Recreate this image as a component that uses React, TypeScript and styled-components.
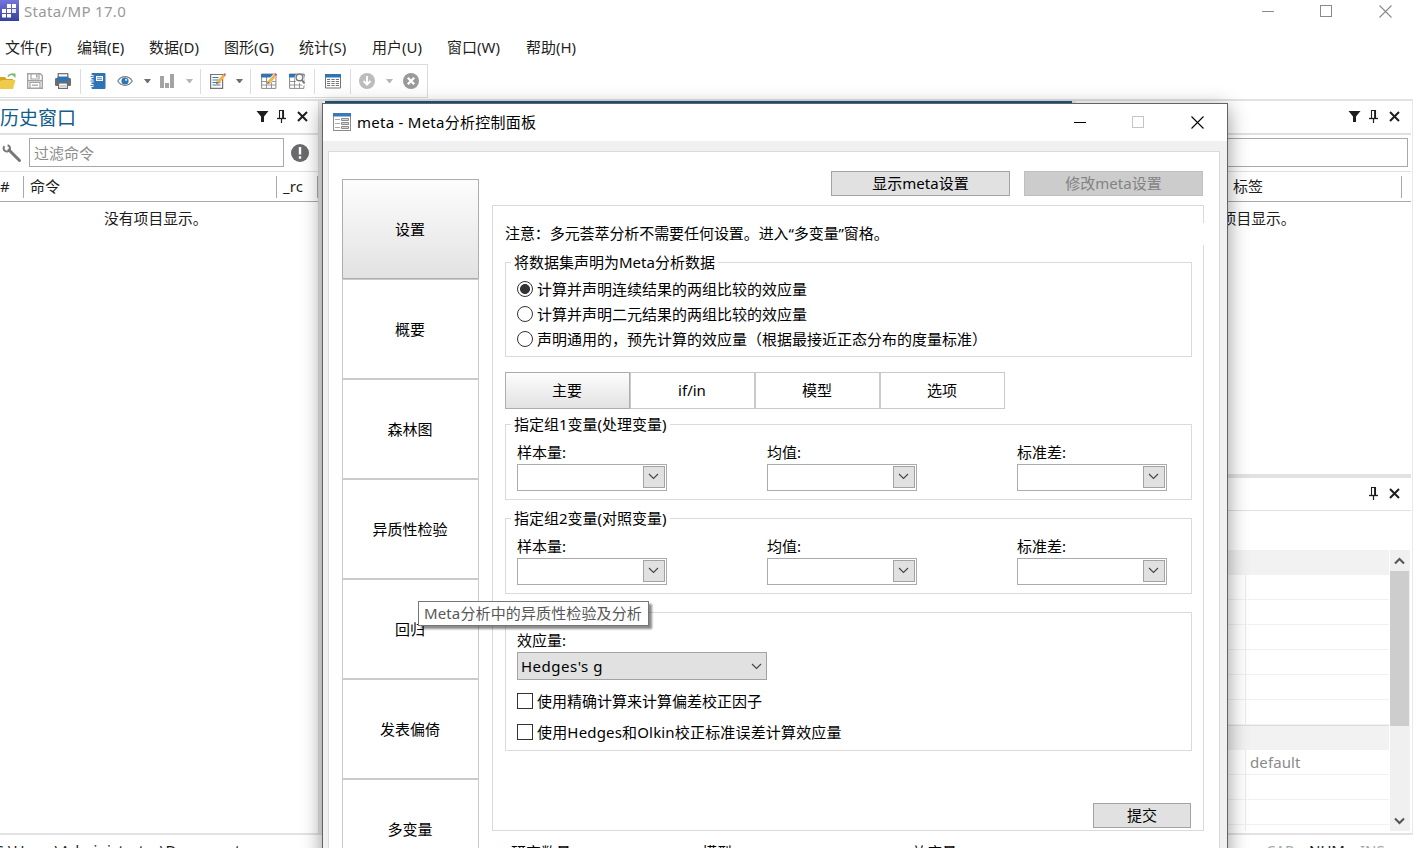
import React from 'react';
import styled, { createGlobalStyle } from 'styled-components';

const Global = createGlobalStyle`
  * { box-sizing: border-box; }
  html, body { margin: 0; padding: 0; background: #fff; overflow: hidden; }
  body { font-family: "Noto Sans", "Noto Sans CJK SC", sans-serif; font-size: 15px; line-height: 22px; color: #000; }
  svg { display: block; flex: none; }
`;

const Screen = styled.div`
  position: relative;
  width: 1413px;
  height: 848px;
  overflow: hidden;
  display: flex;
  flex-direction: column;
  background: #fff;
  white-space: nowrap;
`;

/* ---------- application chrome ---------- */

const TitleBar = styled.header`
  height: 31px;
  display: flex;
  align-items: flex-start;
  flex: none;
`;
const AppName = styled.span`
  margin-left: 5px;
  flex: 1;
  color: #999;
  font-size: 15px;
  letter-spacing: 0.33px;
  line-height: 23px;
`;
const WindowControls = styled.div`
  display: flex;
  gap: 46px;
  padding: 5px 21px 0 0;
`;

const MenuBar = styled.nav`
  height: 33px;
  flex: none;
  display: flex;
  align-items: center;
  color: #1f1f1f;
  padding: 0 0 2px 5px;
`;
const MenuItem = styled.span<{ $w: number }>`
  width: ${p => p.$w}px;
  font-size: 15px;
`;

const ToolbarStrip = styled.div`
  height: 35px;
  flex: none;
  display: flex;
  align-items: flex-start;
`;
const Toolbar = styled.div`
  width: 428px;
  height: 34px;
  border: 1px solid #dcdcdc;
  border-left: 0;
  display: flex;
  align-items: center;
`;
const Tool = styled.span<{ $gap: number }>`
  margin-left: ${p => p.$gap}px;
  flex: none;
`;
const Separator = styled.span<{ $gap: number }>`
  margin-left: ${p => p.$gap}px;
  width: 1px;
  height: 25px;
  background: #dcdcdc;
  flex: none;
`;
const Caret = styled.span<{ $gap: number; $dim?: boolean }>`
  margin-left: ${p => p.$gap}px;
  width: 7px;
  flex: none;
  border: 3.5px solid transparent;
  border-top: 4px solid ${p => (p.$dim ? '#b5b5b5' : '#6e6e6e')};
  border-bottom: 0;
`;

const Workspace = styled.main`
  height: 736px;
  flex: none;
  display: flex;
  border-top: 2px solid #e2e2e2;
  border-bottom: 2px solid #e2e2e2;
`;
const HistoryPane = styled.section`
  width: 319px;
  flex: none;
  border-right: 1px solid #e0e0e0;
`;
const Splitter = styled.div`
  width: 4px;
  flex: none;
  background: #ececec;
`;
const ResultsPane = styled.section`
  margin-left: 2px;
  width: 747px;
  flex: none;
`;
const ResultsCaption = styled.div`
  height: 30px;
  background: #1b5a82;
`;
const SideColumn = styled.div`
  width: 335px;
  flex: none;
  display: flex;
  flex-direction: column;
`;
const RightEdge = styled.div`
  width: 2px;
  border-right: 1px solid #e8e8e8;
`;

const PaneHeader = styled.div<{ $h: number; $line: number }>`
  height: ${p => p.$h}px;
  border-bottom: ${p => p.$line}px solid #e0e0e0;
  display: flex;
  align-items: center;
  justify-content: flex-end;
`;
const PaneTitle = styled.h2`
  margin: 2px 0 0;
  flex: 1;
  font-weight: 400;
  font-size: 19px;
  line-height: 28px;
  color: #125d8d;
`;
const PaneIcons = styled.div<{ $pr: number }>`
  display: flex;
  align-items: center;
  gap: 6px;
  padding-right: ${p => p.$pr}px;
  margin-top: -1px;
`;
const CloseSlot = styled.span`
  margin-left: 2px;
`;
const SearchRow = styled.div`
  height: 37px;
  border-bottom: 1px solid #e0e0e0;
  display: flex;
  align-items: center;
  padding-bottom: 1px;
`;
const SearchInput = styled.div<{ $w: number }>`
  width: ${p => p.$w}px;
  height: 29px;
  border: 1px solid #a8a8a8;
  padding-left: 4px;
  line-height: 28px;
  color: #8c8c8c;
`;
const ColumnHead = styled.div`
  height: 30px;
  display: flex;
  align-items: center;
  border-bottom: 1px solid #a9a9a9;
  color: #1c1c1c;
`;
const Cell = styled.div<{ $w: number; $pl: number }>`
  width: ${p => p.$w}px;
  height: 22px;
  padding-left: ${p => p.$pl}px;
  border-right: 1px solid #a9a9a9;
  line-height: 20px;
`;
const EmptyNote = styled.p<{ $pl: number }>`
  margin: 5px 0 0;
  padding-left: ${p => p.$pl}px;
  line-height: 22px;
  font-size: 14.8px;
  color: #1c1c1c;
`;

const VariablesPane = styled.section`
  height: 373px;
  flex: none;
`;
const PropertiesPane = styled.section`
  border-top: 4px solid #e2e2e2;
  flex: 1;
`;
const PropertiesBody = styled.div`
  display: flex;
  margin-top: 39px;
  height: 281px;
  overflow: hidden;
`;
const PropertyGrid = styled.div`
  width: 313px;
`;
const SectionRow = styled.div<{ $line?: boolean }>`
  height: 25px;
  background: #f2f2f2;
  border-top: 1px solid ${p => (p.$line ? '#dcdcdc' : '#f2f2f2')};
`;
const PropertyRow = styled.div`
  height: 25px;
  display: flex;
  border-bottom: 1px solid #f1f1f1;
`;
const PropertyName = styled.span`
  width: 170px;
  border-right: 1px solid #ececec;
`;
const PropertyValue = styled.span`
  padding-left: 4px;
  line-height: 25px;
  color: #8a8a8a;
  letter-spacing: 0.1px;
`;
const ScrollTrack = styled.div`
  margin-left: 1px;
  width: 20px;
  background: #f0f0f0;
  display: flex;
  flex-direction: column;
  align-items: center;
`;
const ScrollThumb = styled.div`
  width: 19px;
  height: 155px;
  align-self: flex-start;
  background: #cdcdcd;
`;
const ScrollArrow = styled.div`
  height: 21px;
  display: flex;
  align-items: center;
  margin-right: 1px;
`;
const ScrollRest = styled.div`
  flex: 1;
`;

const StatusBar = styled.footer`
  height: 30px;
  flex: none;
  display: flex;
  padding-top: 4px;
  color: #1c1c1c;
`;
const StatusPath = styled.span`
  margin-left: -6px;
  width: 1272px;
  letter-spacing: 0.17px;
`;
const StatusFlag = styled.span<{ $on?: boolean; $w: number }>`
  width: ${p => p.$w}px;
  color: ${p => (p.$on ? '#1c1c1c' : '#a0a8ac')};
`;

/* ---------- floating dialog ---------- */

const Dialog = styled.div`
  position: absolute;
  left: 322px;
  top: 103px;
  width: 906px;
  height: 800px;
  border: 1px solid #636363;
  background: #f0f0f0;
  box-shadow: 0 5px 19px rgba(0, 0, 0, 0.42);
`;
const DialogTitle = styled.div`
  height: 37px;
  background: #fff;
  display: flex;
  align-items: center;
  padding: 0 23px 1px 10px;
`;
const DialogName = styled.span`
  margin-left: 6px;
  flex: 1;
  letter-spacing: 0.26px;
`;
const DialogControls = styled.div`
  display: flex;
  gap: 46px;
  height: 12px;
`;
const DialogFrame = styled.div`
  margin: 10px 0 0 5px;
  width: 892px;
  height: 800px;
  border: 1px solid #dadada;
  background: #fff;
  display: flex;
`;
const SideTabs = styled.div`
  margin: 27px 13px 0 13px;
  width: 137px;
`;
const Tab = styled.div<{ $w: number; $h: number; $active?: boolean; $lift?: boolean }>`
  width: ${p => p.$w}px;
  height: ${p => p.$h}px;
  border: 1px solid ${p => (p.$active ? '#adadad' : '#cacaca')};
  background: ${p => (p.$active ? 'linear-gradient(#fdfdfd, #e2e2e2)' : '#fff')};
  display: flex;
  align-items: center;
  justify-content: center;
  padding: 0 1px ${p => (p.$lift ? 2 : 0)}px 0;
`;
const Pages = styled.div`
  width: 712px;
  padding-top: 19px;
`;
const ButtonRow = styled.div`
  display: flex;
  justify-content: flex-end;
  gap: 14px;
  padding-right: 1px;
`;
const PushButton = styled.div<{ $w: number; $disabled?: boolean }>`
  width: ${p => p.$w}px;
  height: 25px;
  border: 1px solid ${p => (p.$disabled ? '#bfbfbf' : '#a3a3a3')};
  background: ${p => (p.$disabled ? '#cccccc' : '#e1e1e1')};
  color: ${p => (p.$disabled ? '#838383' : '#000')};
  text-align: center;
  line-height: 22px;
`;
const Panel = styled.div`
  margin-top: 9px;
  height: 626px;
  border: 1px solid #dadada;
  padding: 17px 11px 0 12px;
`;
const Notice = styled.p`
  position: relative;
  margin: 0 -12px 0 0;
  height: 22px;
  line-height: 20px;
  letter-spacing: -0.08px;
  background: #fff;
`;
const Group = styled.fieldset<{ $mt: number; $h: number }>`
  margin: ${p => p.$mt}px 0 0;
  height: ${p => p.$h}px;
  min-width: 0;
  border: 1px solid #dadada;
  padding: 0 0 0 11px;
`;
const Legend = styled.legend`
  margin-left: -6px;
  padding: 0 3px;
  height: 21px;
  line-height: 21px;
`;
const OptionRow = styled.label<{ $h: number; $mt?: number }>`
  height: ${p => p.$h}px;
  margin-top: ${p => p.$mt ?? 0}px;
  display: flex;
  align-items: center;
  gap: 4px;
`;
const OptionText = styled.span<{ $track?: number }>`
  letter-spacing: ${p => p.$track ?? 0}px;
`;
const Radio = styled.span<{ $checked?: boolean }>`
  width: 16px;
  height: 16px;
  border: 1px solid #333;
  border-radius: 50%;
  background: ${p => (p.$checked ? 'radial-gradient(circle, #333 4.6px, #fff 5.3px)' : '#fff')};
`;
const Checkbox = styled.span`
  width: 16px;
  height: 16px;
  border: 1px solid #333;
`;
const RadioList = styled.div`
  padding-top: 3px;
  height: 79px;
`;
const TabRow = styled.div`
  margin-top: 15px;
  display: flex;
`;
const FieldRow = styled.div`
  display: flex;
  gap: 100px;
  padding-top: 7px;
`;
const Field = styled.div`
  width: 150px;
`;
const FieldLabel = styled.div`
  height: 22px;
  line-height: 20px;
`;
const Combo = styled.div`
  height: 27px;
  border: 1px solid #a9abb0;
  display: flex;
  justify-content: flex-end;
  padding: 1px;
`;
const ComboButton = styled.span`
  width: 22px;
  height: 22px;
  border: 1px solid #a3a3a3;
  background: #e1e1e1;
  display: flex;
  align-items: center;
  justify-content: center;
  padding: 0 1px 1px 0;
`;
const EffectGroup = styled.div`
  margin-top: 18px;
  height: 139px;
  border: 1px solid #dadada;
  padding: 17px 0 0 11px;
`;
const Select = styled.div`
  width: 250px;
  height: 28px;
  border: 1px solid #a3a3a3;
  background: #e1e1e1;
  display: flex;
  align-items: center;
  justify-content: space-between;
  padding: 0 4px 0 3px;
  letter-spacing: 0.5px;
`;
const SubmitRow = styled.div`
  margin-top: 52px;
  display: flex;
  justify-content: flex-end;
  padding-right: 1px;
`;
const Summary = styled.div`
  display: grid;
  grid-template-columns: 191px 210px auto;
  padding: 10px 0 0 19px;
`;
const Tooltip = styled.div`
  position: absolute;
  left: 418px;
  top: 601px;
  width: 231px;
  height: 25px;
  border: 1px solid #767676;
  background: #fff;
  color: #575757;
  padding-left: 5px;
  line-height: 22px;
  letter-spacing: 0.13px;
  box-shadow: 3px 3px 2px rgba(0, 0, 0, 0.45);
`;

/* ---------- icons ---------- */

const LogoIcon = () => (
  <svg width="19" height="21" viewBox="0 0 19 21">
    <defs>
      <linearGradient id="logo" x1="0" y1="0" x2="0" y2="1">
        <stop offset="0" stopColor="#7674dc" />
        <stop offset="1" stopColor="#33429c" />
      </linearGradient>
    </defs>
    <rect width="19" height="21" fill="url(#logo)" />
    <g fill="#fff">
      <rect x="7" y="4" width="4" height="4" /><rect x="12" y="4" width="4" height="4" />
      <rect x="2" y="9" width="4" height="4" /><rect x="7" y="9" width="4" height="4" /><rect x="12" y="9" width="4" height="4" opacity=".85" />
      <rect x="2" y="14" width="4" height="3.5" /><rect x="7" y="14" width="4" height="3.5" />
    </g>
  </svg>
);
const MinIcon = ({ c }: { c: string }) => (
  <svg width="12" height="13"><path d="M0 6.5H12" stroke={c} /></svg>
);
const MaxIcon = ({ c }: { c: string }) => (
  <svg width="13" height="13"><rect x=".5" y=".5" width="11" height="11" fill="none" stroke={c} /></svg>
);
const CloseIcon = ({ c }: { c: string }) => (
  <svg width="13" height="13"><path d="M.5.5l12 12M12.500.5l-12 12" stroke={c} strokeWidth="1.1" /></svg>
);
const FolderIcon = () => (
  <svg width="16" height="16" viewBox="0 0 16 16">
    <path d="M0 4h5l1.500 2H13v3H0z" fill="#d9a520" />
    <path d="M0 16h13L15.500 7H2.500L0 8z" fill="#efcb4c" />
    <path d="M8 3.500C9.500 1 12 1 13 1.800" fill="none" stroke="#7cb86a" strokeWidth="1.500" /><path d="M11 .5h4.500V5z" fill="#7cb86a" />
  </svg>
);
const SaveIcon = () => (
  <svg width="16" height="16" viewBox="0 0 16 16">
    <path d="M.7.700h12.500l2.100 2.100v12.500H.7z" fill="#fff" stroke="#a3a3a3" strokeWidth="1.400" />
    <path d="M4 .5h8V6H4z" fill="none" stroke="#a3a3a3" strokeWidth="1.200" /><path d="M9 1.500h1.600v3H9z" fill="#a3a3a3" />
    <path d="M3 9.500h10V15H3z" fill="#fff" stroke="#a3a3a3" strokeWidth="1.200" /><path d="M5 12.200h6" stroke="#a3a3a3" strokeWidth="1.300" />
    <path d="M.7 7.700h14.600" stroke="#a3a3a3" strokeWidth="1.600" />
  </svg>
);
const PrintIcon = () => (
  <svg width="16" height="16" viewBox="0 0 16 16">
    <rect x="3.200" y=".7" width="9.600" height="5" fill="#fff" stroke="#6d6d6d" strokeWidth="1.200" />
    <rect y="5" width="16" height="8" rx="1.200" fill="#6d6d6d" />
    <rect x="2.500" y="3.500" width="11" height="5" fill="#2f74b5" />
    <rect x="3.600" y="10" width="8.800" height="5.400" fill="#fff" stroke="#6d6d6d" strokeWidth="1.200" />
    <path d="M5 13h6" stroke="#9aa" />
  </svg>
);
const NotebookIcon = () => (
  <svg width="16" height="16" viewBox="0 0 16 16">
    <rect x="1.500" width="14" height="16" rx="1" fill="#2f74b5" />
    <rect x="6" y="3" width="7" height="5" fill="#fff" /><path d="M7 4.700h5M7 6.400h5" stroke="#2f74b5" strokeWidth=".8" />
    <path d="M1 3.500h2.500M1 8h2.500M1 12.500h2.500" stroke="#fff" strokeWidth="2.800" /><path d="M.5 3.500h3M.5 8h3M.5 12.500h3" stroke="#4b7fae" strokeWidth="1.200" />
  </svg>
);
const EyeIcon = () => (
  <svg width="16" height="16" viewBox="0 0 16 16">
    <path d="M.8 8C4.200 2.200 11.800 2.200 15.200 8 11.800 13.800 4.200 13.800.8 8z" fill="#fff" stroke="#7b7f83" strokeWidth="1.200" />
    <circle cx="8" cy="8" r="3.600" fill="#2f74b5" /><circle cx="9.100" cy="6.800" r="1.100" fill="#dcebf7" />
  </svg>
);
const BarsIcon = () => (
  <svg width="16" height="16" viewBox="0 0 16 16" fill="#a3a3a3"><path d="M1 3h4v12H1zM6 10h4v5H6zM11 1h4v14h-4z" /></svg>
);
const Pencil = () => (
  <>
    <path d="M6 11l.8-3 2.600 2.200z" fill="#8a6d3b" />
    <path d="M6.800 8L13 1.600l2 1.900L9.200 10.300z" fill="#f6b24a" />
    <path d="M13 1.600L14.600 0 16 1.600 15 3.500z" fill="#e0605e" />
  </>
);
const DoFileIcon = () => (
  <svg width="16" height="16" viewBox="0 0 16 16">
    <path d="M.6 1.500h12v13.900H.6z" fill="#fff" stroke="#757575" strokeWidth="1.200" />
    <path d="M2.500 4.500h6M2.500 7h8M2.500 9.500h8M2.500 12h8" stroke="#3b79b3" strokeWidth="1.100" />
    <Pencil />
  </svg>
);
const SheetBase = () => (
  <>
    <path d="M.6 1h14.300v14.400H.6z" fill="#fff" stroke="#8a8a8a" strokeWidth="1" />
    <path d="M.6 8.500h14.300M.6 12h14.300M5.500 4v11M10.500 4v11" stroke="#8a8a8a" strokeWidth=".9" />
    <path d="M0 1h15.500v3.500H0z" fill="#2f74b5" />
  </>
);
const DataEditIcon = () => (
  <svg width="16" height="16" viewBox="0 0 16 16"><SheetBase /><path d="M5.500 11.500L7 7l6-6.500L16 3l-6.500 7.500z" fill="#fff" /><Pencil /></svg>
);
const DataBrowseIcon = () => (
  <svg width="16" height="16" viewBox="0 0 16 16">
    <SheetBase />
    <circle cx="10.500" cy="5" r="5" fill="#fff" />
    <path d="M12 8l3.500 4" stroke="#fff" strokeWidth="4" />
    <circle cx="10.500" cy="4.400" r="3.400" fill="#f7f7f7" stroke="#777" strokeWidth="1.400" /><path d="M12.800 7L15.600 10.500" stroke="#777" strokeWidth="2" />
  </svg>
);
const VarsIcon = () => (
  <svg width="16" height="16" viewBox="0 0 16 16">
    <path d="M.5 1.500h15v13.500H.5z" fill="#fff" stroke="#757575" />
    <path d="M0 1h16v3.500H0z" fill="#2f74b5" />
    <path d="M2 6.500h12M2 8.500h12M2 10.500h12M2 12.500h12" stroke="#757575" strokeDasharray="3.200 1.200" />
  </svg>
);
const DownIcon = () => (
  <svg width="16" height="16" viewBox="0 0 16 16"><circle cx="8" cy="8" r="8" fill="#bcbcbc" /><path d="M8 3v8.500M4.500 8L8 11.700 11.500 8" fill="none" stroke="#fff" strokeWidth="1.900" /></svg>
);
const StopIcon = () => (
  <svg width="16" height="16" viewBox="0 0 16 16"><circle cx="8" cy="8" r="8" fill="#9a9a9a" /><path d="M4.800 4.800l6.400 6.400M11.200 4.800l-6.400 6.400" stroke="#fff" strokeWidth="2.300" /></svg>
);
const FilterIcon = () => (
  <svg width="13" height="13" viewBox="0 0 13 13" fill="#1e1e1e"><path d="M.5 1h12L8 6.500V12H5V6.500z" /></svg>
);
const PinIcon = () => (
  <svg width="13" height="13" viewBox="0 0 13 13" fill="none" stroke="#1e1e1e"><path d="M4.500 8V.5h4V8" strokeWidth="1.100" /><path d="M8 .5V8" strokeWidth="1.800" /><path d="M2 8.500h9" strokeWidth="1.300" /><path d="M6.500 9v4" strokeWidth="1.200" /></svg>
);
const PaneCloseIcon = () => (
  <svg width="13" height="13" viewBox="0 0 13 13"><path d="M2 2l9 9M11 2l-9 9" stroke="#1e1e1e" strokeWidth="2" /></svg>
);
const WrenchIcon = () => (
  <svg width="20" height="20" viewBox="0 0 20 20">
    <path d="M7 7L17.500 17.500" stroke="#777" strokeWidth="3" strokeLinecap="round" />
    <path d="M2.400 3.200A3.200 3.200 0 1 0 5.600 2.200" fill="none" stroke="#777" strokeWidth="2" />
  </svg>
);
const AlertIcon = () => (
  <svg width="18" height="18" viewBox="0 0 18 18"><circle cx="9" cy="9" r="9" fill="#6a6a6d" /><path d="M9 3v7.500M9 12.300v2.400" stroke="#fff" strokeWidth="2.400" /></svg>
);
const FormIcon = () => (
  <svg width="18" height="18" viewBox="0 0 18 18">
    <rect x=".5" y=".5" width="17" height="17" fill="#fff" stroke="#8c8c8c" />
    <rect width="18" height="3.500" fill="#3a78b9" />
    <path d="M2 6.500h5M2 10.500h5M2 14.500h5" stroke="#a9a9a9" />
    <path d="M8.500 5.500h7v2h-7zM8.500 9.500h7v2h-7zM8.500 13.500h7v2h-7z" fill="#d8d8d8" stroke="#8c8c8c" />
  </svg>
);
const Chevron = () => (
  <svg width="11" height="7" viewBox="0 0 11 7"><path d="M1 1l4.500 4.500L10 1" fill="none" stroke="#444" strokeWidth="1.100" /></svg>
);
const ScrollChevron = ({ down }: { down?: boolean }) => (
  <svg width="11" height="8" viewBox="0 0 11 8"><path d={down ? 'M1 1.500L5.500 6 10 1.500' : 'M1 6.500L5.500 2 10 6.500'} fill="none" stroke="#555" strokeWidth="2.100" /></svg>
);

const MENUS: [string, number][] = [
  ['文件(F)', 72], ['编辑(E)', 72], ['数据(D)', 75], ['图形(G)', 75],
  ['统计(S)', 73], ['用户(U)', 75], ['窗口(W)', 79], ['帮助(H)', 60],
];
const PAGES = ['设置', '概要', '森林图', '异质性检验', '回归', '发表偏倚', '多变量'];
const SUBTABS = ['主要', 'if/in', '模型', '选项'];
const METHODS = [
  '计算并声明连续结果的两组比较的效应量',
  '计算并声明二元结果的两组比较的效应量',
  '声明通用的，预先计算的效应量（根据最接近正态分布的度量标准）',
];
const FIELDS = ['样本量:', '均值:', '标准差:'];

const VariableGroup = ({ title, mt }: { title: string; mt: number }) => (
  <Group $mt={mt} $h={86}>
    <Legend>{title}</Legend>
    <FieldRow>
      {FIELDS.map(f => (
        <Field key={f}>
          <FieldLabel>{f}</FieldLabel>
          <Combo><ComboButton><Chevron /></ComboButton></Combo>
        </Field>
      ))}
    </FieldRow>
  </Group>
);

const PropertyRows = ({ values }: { values: string[] }) => (
  <>
    {values.map((v, i) => (
      <PropertyRow key={i}><PropertyName /><PropertyValue>{v}</PropertyValue></PropertyRow>
    ))}
  </>
);

export default function App() {
  return (
    <>
      <Global />
      <Screen>
        <TitleBar>
          <LogoIcon />
          <AppName>Stata/MP 17.0</AppName>
          <WindowControls><MinIcon c="#8a8a8a" /><MaxIcon c="#8a8a8a" /><CloseIcon c="#8a8a8a" /></WindowControls>
        </TitleBar>
        <MenuBar>{MENUS.map(([t, w]) => <MenuItem key={t} $w={w}>{t}</MenuItem>)}</MenuBar>
        <ToolbarStrip>
          <Toolbar>
            <Tool $gap={0}><FolderIcon /></Tool>
            <Tool $gap={11}><SaveIcon /></Tool>
            <Tool $gap={12}><PrintIcon /></Tool>
            <Separator $gap={9} />
            <Tool $gap={9}><NotebookIcon /></Tool>
            <Tool $gap={11}><EyeIcon /></Tool>
            <Caret $gap={11} />
            <Tool $gap={8}><BarsIcon /></Tool>
            <Caret $gap={11} $dim />
            <Separator $gap={7} />
            <Tool $gap={9}><DoFileIcon /></Tool>
            <Caret $gap={10} />
            <Separator $gap={7} />
            <Tool $gap={10}><DataEditIcon /></Tool>
            <Tool $gap={12}><DataBrowseIcon /></Tool>
            <Separator $gap={9} />
            <Tool $gap={10}><VarsIcon /></Tool>
            <Separator $gap={9} />
            <Tool $gap={8}><DownIcon /></Tool>
            <Caret $gap={11} $dim />
            <Tool $gap={10}><StopIcon /></Tool>
          </Toolbar>
        </ToolbarStrip>
        <Workspace>
          <HistoryPane>
            <PaneHeader $h={34} $line={2}>
              <PaneTitle>历史窗口</PaneTitle>
              <PaneIcons $pr={9}><FilterIcon /><PinIcon /><CloseSlot><PaneCloseIcon /></CloseSlot></PaneIcons>
            </PaneHeader>
            <SearchRow>
              <Tool $gap={2}><WrenchIcon /></Tool>
              <Tool $gap={7}><SearchInput $w={255}>过滤命令</SearchInput></Tool>
              <Tool $gap={7}><AlertIcon /></Tool>
            </SearchRow>
            <ColumnHead>
              <Cell $w={24} $pl={0}>#</Cell><Cell $w={254} $pl={6}>命令</Cell><Cell $w={41} $pl={6}>_rc</Cell>
            </ColumnHead>
            <EmptyNote $pl={104}>没有项目显示。</EmptyNote>
          </HistoryPane>
          <Splitter />
          <ResultsPane><ResultsCaption /></ResultsPane>
          <Splitter />
          <SideColumn>
            <VariablesPane>
              <PaneHeader $h={34} $line={2}>
                <PaneIcons $pr={10}><FilterIcon /><PinIcon /><CloseSlot><PaneCloseIcon /></CloseSlot></PaneIcons>
              </PaneHeader>
              <SearchRow><SearchInput $w={332} /></SearchRow>
              <ColumnHead><Cell $w={326} $pl={157}>标签</Cell></ColumnHead>
              <EmptyNote $pl={116}>没有项目显示。</EmptyNote>
            </VariablesPane>
            <PropertiesPane>
              <PaneHeader $h={33} $line={1}>
                <PaneIcons $pr={10}><PinIcon /><CloseSlot><PaneCloseIcon /></CloseSlot></PaneIcons>
              </PaneHeader>
              <PropertiesBody>
                <PropertyGrid>
                  <SectionRow />
                  <PropertyRows values={['', '', '', '', '', '']} />
                  <SectionRow $line />
                  <PropertyRows values={['default', '', '', '']} />
                </PropertyGrid>
                <ScrollTrack>
                  <ScrollArrow><ScrollChevron /></ScrollArrow>
                  <ScrollThumb />
                  <ScrollRest />
                  <ScrollArrow><ScrollChevron down /></ScrollArrow>
                </ScrollTrack>
              </PropertiesBody>
            </PropertiesPane>
          </SideColumn>
          <RightEdge />
        </Workspace>
        <StatusBar>
          <StatusPath>C:\Users\Administrator\Documents</StatusPath>
          <StatusFlag $w={43}>CAP</StatusFlag>
          <StatusFlag $w={51} $on>NUM</StatusFlag>
          <StatusFlag $w={40}>INS</StatusFlag>
        </StatusBar>

        <Dialog>
          <DialogTitle>
            <FormIcon />
            <DialogName>meta - Meta分析控制面板</DialogName>
            <DialogControls><MinIcon c="#000" /><MaxIcon c="#c4c4c4" /><CloseIcon c="#000" /></DialogControls>
          </DialogTitle>
          <DialogFrame>
            <SideTabs>
              {PAGES.map((p, i) => <Tab key={p} $w={137} $h={100} $active={i === 0}>{p}</Tab>)}
            </SideTabs>
            <Pages>
              <ButtonRow>
                <PushButton $w={179}>显示meta设置</PushButton>
                <PushButton $w={179} $disabled>修改meta设置</PushButton>
              </ButtonRow>
              <Panel>
                <Notice>注意：多元荟萃分析不需要任何设置。进入“多变量”窗格。</Notice>
                <Group $mt={7} $h={105}>
                  <Legend>将数据集声明为Meta分析数据</Legend>
                  <RadioList>
                    {METHODS.map((m, i) => (
                      <OptionRow key={m} $h={25}>
                        <Radio $checked={i === 0} />
                        <OptionText>{m}</OptionText>
                      </OptionRow>
                    ))}
                  </RadioList>
                </Group>
                <TabRow>
                  {SUBTABS.map((t, i) => <Tab key={t} $w={125} $h={37} $lift $active={i === 0}>{t}</Tab>)}
                </TabRow>
                <VariableGroup title="指定组1变量(处理变量)" mt={5} />
                <VariableGroup title="指定组2变量(对照变量)" mt={8} />
                <EffectGroup>
                  <FieldLabel>效应量:</FieldLabel>
                  <Select>Hedges's g<Chevron /></Select>
                  <OptionRow $h={22} $mt={10}><Checkbox /><OptionText>使用精确计算来计算偏差校正因子</OptionText></OptionRow>
                  <OptionRow $h={22} $mt={9}><Checkbox /><OptionText $track={0.17}>使用Hedges和Olkin校正标准误差计算效应量</OptionText></OptionRow>
                </EffectGroup>
                <SubmitRow><PushButton $w={98}>提交</PushButton></SubmitRow>
              </Panel>
              <Summary><span>研究数量:</span><span>模型:</span><span>效应量:</span></Summary>
            </Pages>
          </DialogFrame>
        </Dialog>
        <Tooltip>Meta分析中的异质性检验及分析</Tooltip>
      </Screen>
    </>
  );
}
